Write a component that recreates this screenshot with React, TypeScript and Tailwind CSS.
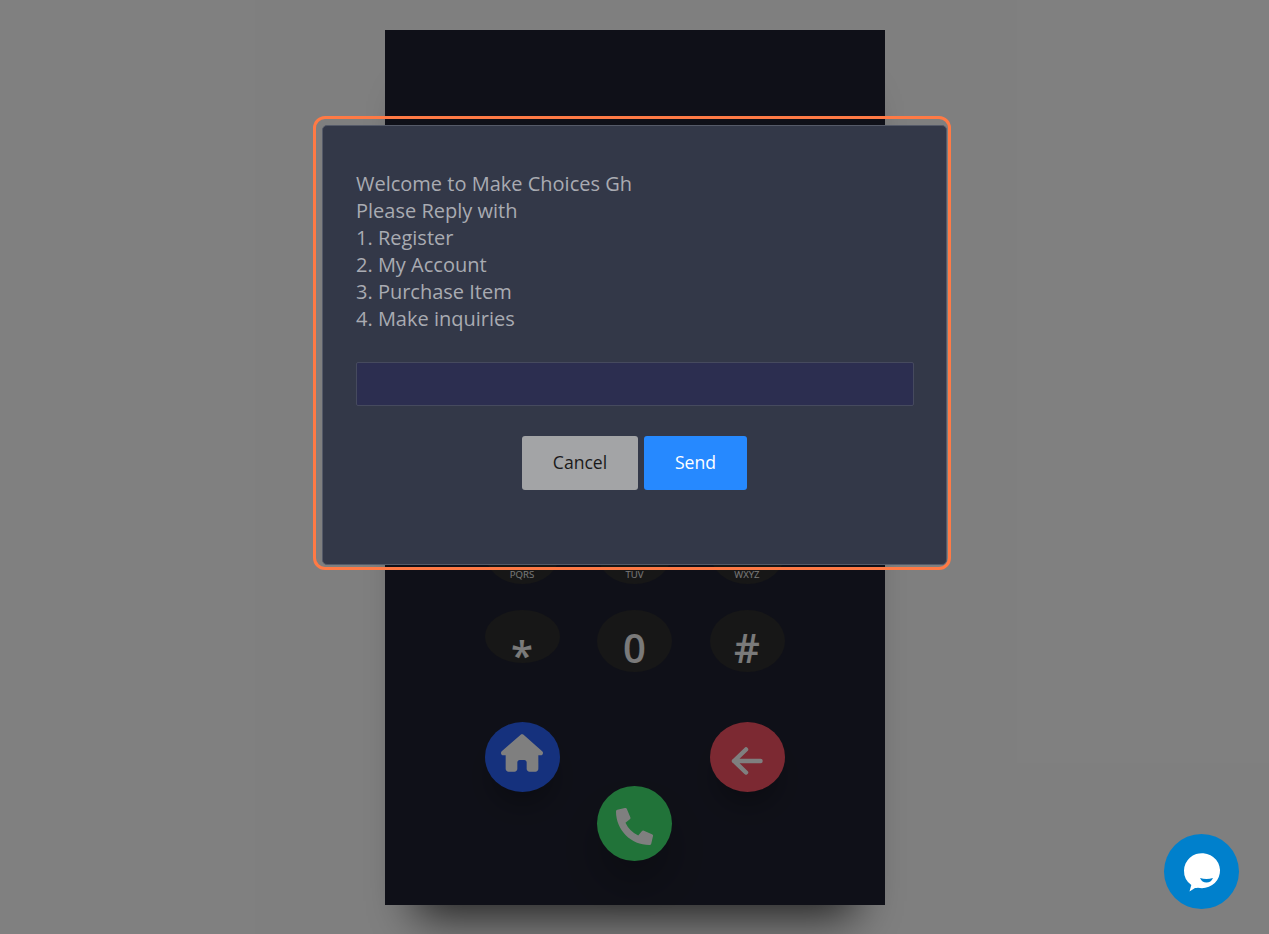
// App.tsx
import React from "react";
import { FaPhoneAlt } from "react-icons/fa";
import { FaHouse } from "react-icons/fa6";

const Key = ({ sub }: { sub: string }) => (
  <button className="w-[75px] h-[62px] rounded-[50%] bg-[#2e2e2e] flex flex-col items-center justify-end text-[#f4f4f4] leading-none">
    <span className="text-[9.6px] pb-[4px]">{sub}</span>
  </button>
);

const App: React.FC = () => {
  return (
    <div className="relative h-[934px] overflow-hidden bg-white pt-[30px] font-['Open_Sans',sans-serif]">
      {/* phone behind the dialog */}
      <div className="mx-auto w-[500px] h-[875px] pt-[492px] pl-[100px] pr-[100px] bg-[#1f2130] shadow-[0_41px_43px_-30px_rgba(0,0,0,0.75)]">
        <div className="grid grid-cols-[75px_75px_75px] gap-y-[26px] justify-between">
          <Key sub="PQRS" />
          <Key sub="TUV" />
          <Key sub="WXYZ" />
          <button className="w-[75px] h-[53px] rounded-[50%] bg-[#2e2e2e] flex justify-center text-[#f4f4f4] text-[40px] font-semibold leading-none pt-[25px]">
            *
          </button>
          <button className="w-[75px] h-[62px] rounded-[50%] bg-[#2e2e2e] flex justify-center text-[#f4f4f4] text-[40px] font-semibold leading-none pt-[18px]">
            0
          </button>
          <button className="w-[75px] h-[62px] rounded-[50%] bg-[#2e2e2e] flex justify-center text-[#f4f4f4] text-[40px] font-semibold leading-none pt-[18px]">
            #
          </button>
        </div>
        <div className="mt-[50px] flex items-start justify-between">
          <button className="w-[75px] h-[70px] pb-[8px] rounded-[50%] bg-[#2b63fa] flex items-center justify-center text-white shadow-[0_20px_20px_-5px_rgba(0,0,0,0.2)]">
            <FaHouse size={42} />
          </button>
          <button className="mt-[64px] w-[75px] h-[75px] pt-[6px] rounded-full bg-[#43e772] flex items-center justify-center text-white shadow-[0_25px_35px_rgba(0,0,0,0.2)]">
            <FaPhoneAlt size={37} />
          </button>
          <button className="w-[75px] h-[70px] pt-[8px] rounded-[50%] bg-[#f95264] flex items-center justify-center text-white shadow-[0_20px_20px_-5px_rgba(0,0,0,0.2)]">
            <svg width="32" height="28" viewBox="0 0 32 28" fill="none" stroke="currentColor" strokeWidth="4.5" strokeLinecap="round" strokeLinejoin="round">
              <path d="M29.500 14H3M15 2.500L3 14L15 25.500" />
            </svg>
          </button>
        </div>
      </div>

      {/* backdrop */}
      <div className="absolute inset-0 bg-black/50" />

      {/* dialog */}
      <div className="absolute left-[313px] top-[116px] w-[638px] h-[454px] border-[3px] border-[#ff7a45] rounded-[12px] pl-[6px] pt-[6px]">
        <div className="h-[440px] w-[625px] rounded-[5px] border border-[#555a68] bg-[#333848] px-[33px] pt-[44px]">
          <div className="text-[20px] leading-[27px] text-[#a9abb2]">
            <p>Welcome to Make Choices Gh</p>
            <p>Please Reply with</p>
            <p>1. Register</p>
            <p>2. My Account</p>
            <p>3. Purchase Item</p>
            <p>4. Make inquiries</p>
          </div>
          <input className="mt-[30px] block w-[558px] h-[44px] rounded-[2px] border border-[#464a5e] bg-[#2c2e50]" />
          <div className="mt-[30px] flex justify-center gap-[6px]">
            <button className="w-[116px] h-[54px] pb-[2px] rounded-[3px] bg-[#a3a4a6] text-[17.6px] text-[#1a1a1a]">Cancel</button>
            <button className="w-[103px] h-[54px] pb-[2px] rounded-[3px] bg-[#2689ff] text-[17.6px] text-white">Send</button>
          </div>
        </div>
      </div>

      {/* chat bubble */}
      <button className="absolute left-[1164px] top-[834px] w-[75px] h-[75px] rounded-full bg-[#0080cc] flex items-center justify-center">
        <svg width="75" height="75" viewBox="0 0 75 75">
          <path d="M20 36.500a18 17.500 0 1 1 14 17.200q-2 0.300-3 0.300l-5.500 3.500l1.800-6.500A18 17.500 0 0 1 20 36.500z" fill="#fff" />
          <path d="M36 44q6.500 2 13 0q-2 4.500-6.500 4.500T36 44z" fill="#0080cc" />
        </svg>
      </button>
    </div>
  );
};

export default App;
